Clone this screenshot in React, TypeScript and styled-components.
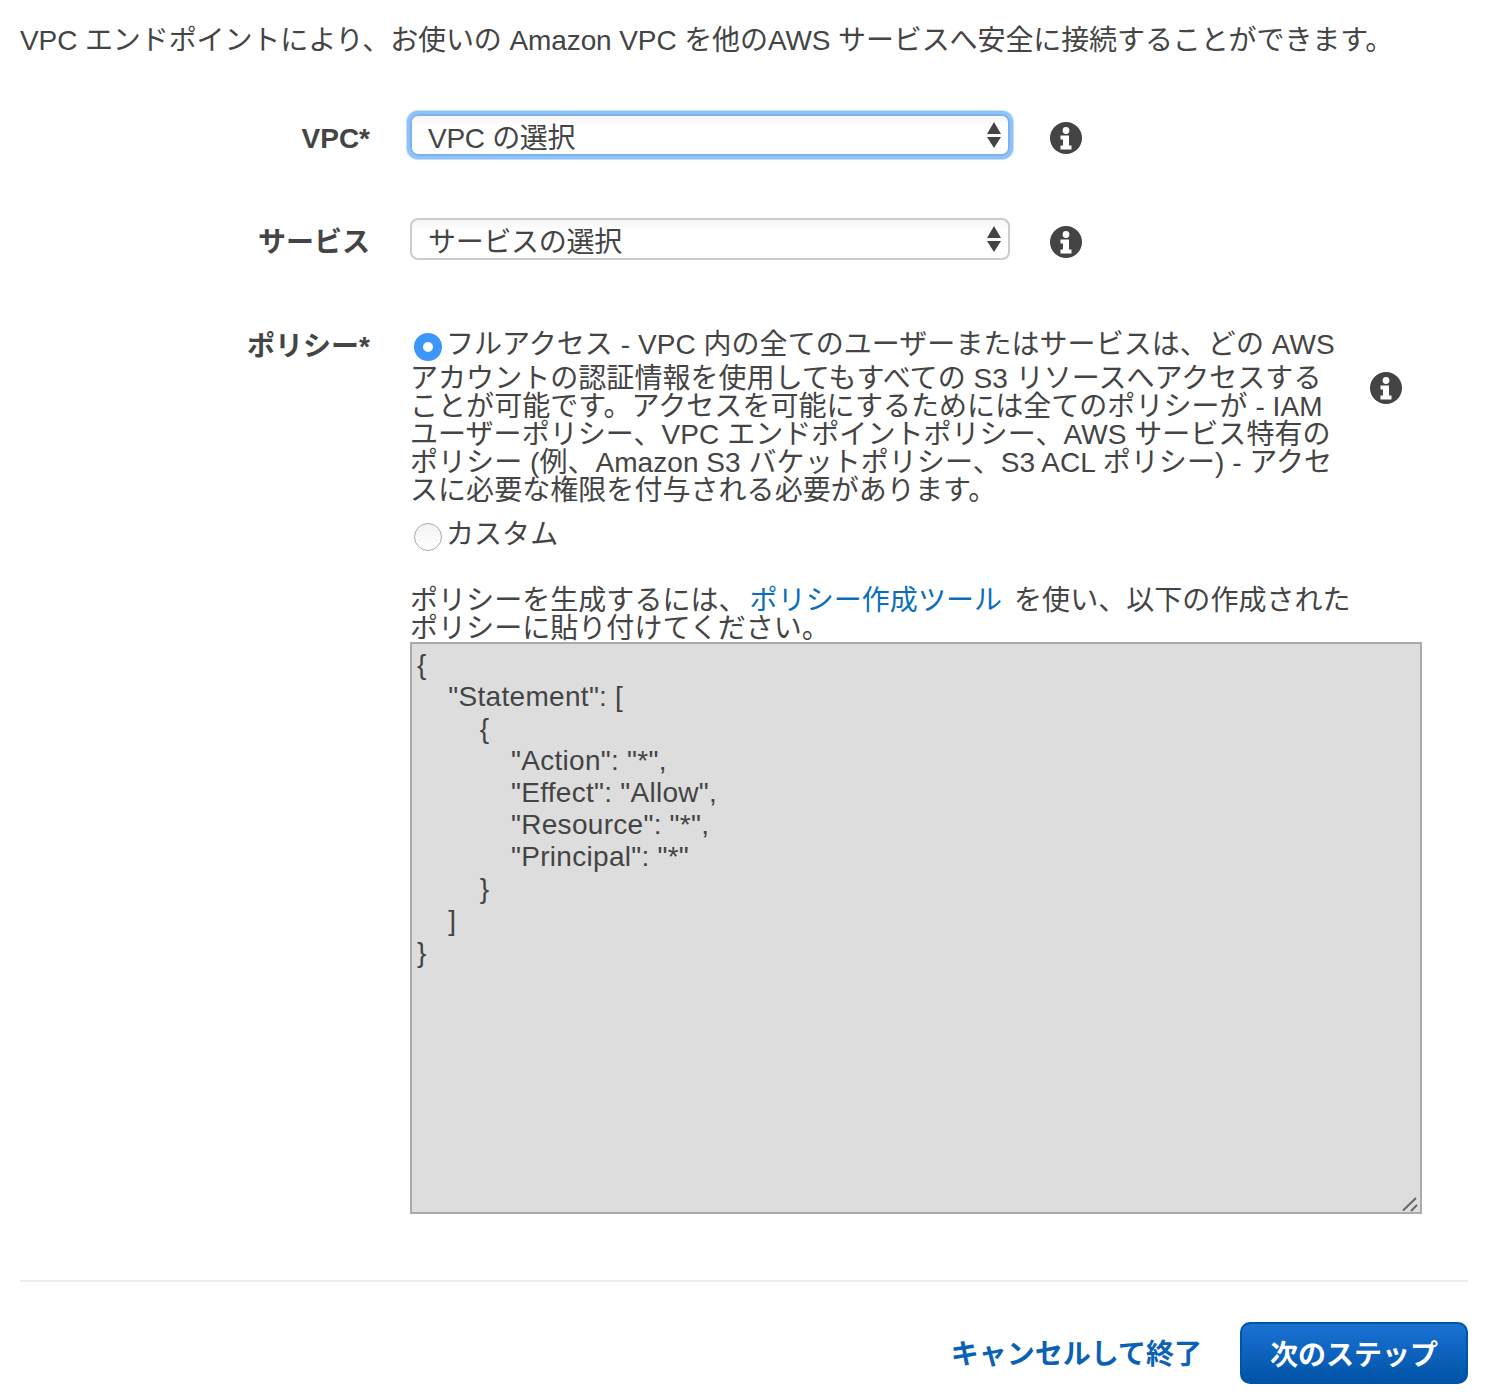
import React from "react"
import styled, { createGlobalStyle } from "styled-components"

const policyJson = `{
    "Statement": [
        {
            "Action": "*",
            "Effect": "Allow",
            "Resource": "*",
            "Principal": "*"
        }
    ]
}`

const GlobalStyle = createGlobalStyle`
  html, body {
    margin: 0;
    padding: 0;
    background: #fff;
    overflow: hidden;
  }
  body {
    font-family: "Liberation Sans", "Noto Sans CJK JP", sans-serif;
    font-size: 28px;
    color: #444;
  }
`

const Page = styled.div`
  width: 1486px;
  height: 1392px;
  box-sizing: border-box;
  padding: 24px 18px 0 20px;
`

const Intro = styled.p`
  margin: 0 0 56px;
  line-height: 34px;
  letter-spacing: -0.1px;
  white-space: nowrap;
`

const Row = styled.div<{ $gap: number }>`
  display: grid;
  grid-template-columns: 350px 1fr;
  column-gap: 40px;
  align-items: start;
  margin-bottom: ${(p) => p.$gap}px;
`

const Label = styled.label<{ $drop?: number }>`
  margin-top: ${(p) => p.$drop ?? 0}px;
  font-weight: bold;
  text-align: right;
  line-height: 42px;
  white-space: nowrap;
`

const SelectLine = styled.div`
  display: flex;
  align-items: center;
  gap: 40px;
`

const SelectWrap = styled.div`
  position: relative;
  width: 600px;
  height: 42px;
`

const Select = styled.select<{ $focused?: boolean }>`
  appearance: none;
  width: 100%;
  height: 100%;
  padding: 6px 40px 0 16px;
  font: inherit;
  letter-spacing: -0.3px;
  color: #444;
  background: linear-gradient(#f6f6f6, #fff 30%);
  border: 2px solid ${(p) => (p.$focused ? "#7fb2e8" : "#ccc")};
  border-radius: 8px;
  outline: none;
  box-shadow: ${(p) => (p.$focused ? "0 0 0 3px #8cc1fb, 0 0 0 4px #c3defc" : "none")};
`

const Arrows = styled.svg`
  position: absolute;
  top: 7px;
  right: 8px;
  width: 16px;
  height: 28px;
  pointer-events: none;
`

const InfoSvg = styled.svg<{ $top?: number }>`
  flex: none;
  width: 32px;
  height: 32px;
  margin-top: ${(p) => p.$top ?? 0}px;
`

const PolicyTop = styled.div`
  display: flex;
  align-items: flex-start;
  gap: 20px;
`

const Options = styled.div`
  width: 940px;
`

const Option = styled.label`
  display: block;
  line-height: 28px;
  letter-spacing: 0.05px;
  white-space: nowrap;
`

const CustomOption = styled(Option)`
  margin-top: 11px;
`

const Radio = styled.input`
  appearance: none;
  display: inline-block;
  box-sizing: border-box;
  width: 28px;
  height: 28px;
  margin: 7px 4px 4px 4px;
  vertical-align: -11px;
  border-radius: 50%;
  border: 1px solid #aaa;
  background: linear-gradient(#f2f2f2, #fff);
  &:checked {
    border: 9px solid #3d97fb;
    background: #fff;
  }
`

const Hint = styled.p`
  margin: 32px 0 0;
  line-height: 28px;
  letter-spacing: 0.05px;
  white-space: nowrap;
`

const Link = styled.a`
  color: #0a6ebd;
  text-decoration: none;
  margin: 0 12px 0 3px;
`

const TextareaWrap = styled.div`
  position: relative;
  width: 1012px;
  height: 572px;
  margin-top: -1px;
`

const PolicyText = styled.textarea`
  display: block;
  box-sizing: border-box;
  width: 100%;
  height: 100%;
  padding: 5px 5px;
  font: inherit;
  line-height: 32px;
  letter-spacing: 0.3px;
  word-spacing: -0.25px;
  color: #444;
  background: #ddd;
  border: 2px solid #aaa;
  border-radius: 0;
  outline: none;
  overflow: hidden;
  white-space: pre;
  resize: none;
`

const Grip = styled.svg`
  position: absolute;
  right: 2px;
  bottom: 2px;
  width: 18px;
  height: 16px;
`

const Divider = styled.hr`
  margin: 66px 0 0;
  border: 0;
  border-top: 2px solid #eee;
`

const Footer = styled.div`
  display: flex;
  align-items: center;
  justify-content: flex-end;
  gap: 38px;
  margin-top: 40px;
`

const Cancel = styled.a`
  padding-bottom: 2px;
  color: #0a62b5;
  font-weight: bold;
  text-decoration: none;
  white-space: nowrap;
`

const NextButton = styled.button`
  width: 228px;
  height: 62px;
  padding: 0;
  font: inherit;
  font-weight: bold;
  color: #fff;
  background: linear-gradient(#1a72d4, #0053a6);
  border: 2px solid #0054a6;
  border-radius: 10px;
`

const InfoIcon = ({ top }: { top?: number }) => (
  <InfoSvg $top={top} viewBox="0 0 32 32">
    <circle cx="16" cy="16" r="16" fill="#444" />
    <circle cx="16" cy="8.500" r="3.400" fill="#fff" />
    <path d="M10.500 13.500h8.500v10h2.500v4h-11v-4h2.500v-6h-2.500z" fill="#fff" />
  </InfoSvg>
)

const SelectArrows = () => (
  <Arrows viewBox="0 0 16 28">
    <path d="M8 1l7 12H1zM8 27l-7-11h14z" fill="#444" />
  </Arrows>
)

export default function App() {
  return (
    <Page>
      <GlobalStyle />
      <Intro>VPC エンドポイントにより、お使いの Amazon VPC を他のAWS サービスへ安全に接続することができます。</Intro>

      <Row $gap={58}>
        <Label $drop={4}>VPC*</Label>
        <SelectLine>
          <SelectWrap>
            <Select $focused defaultValue="vpc">
              <option value="vpc">VPC の選択</option>
            </Select>
            <SelectArrows />
          </SelectWrap>
          <InfoIcon top={6} />
        </SelectLine>
      </Row>

      <Row $gap={62}>
        <Label $drop={4}>サービス</Label>
        <SelectLine>
          <SelectWrap>
            <Select defaultValue="service">
              <option value="service">サービスの選択</option>
            </Select>
            <SelectArrows />
          </SelectWrap>
          <InfoIcon top={6} />
        </SelectLine>
      </Row>

      <Row $gap={0}>
        <Label>ポリシー*</Label>
        <div>
          <PolicyTop>
            <Options>
              <Option>
                <Radio type="radio" name="policy" defaultChecked />
                フルアクセス - VPC 内の全てのユーザーまたはサービスは、どの AWS
                <br />
                アカウントの認証情報を使用してもすべての S3 リソースへアクセスする
                <br />
                ことが可能です。アクセスを可能にするためには全てのポリシーが - IAM
                <br />
                ユーザーポリシー、VPC エンドポイントポリシー、AWS サービス特有の
                <br />
                ポリシー (例、Amazon S3 バケットポリシー、S3 ACL ポリシー) - アクセ
                <br />
                スに必要な権限を付与される必要があります。
              </Option>
              <CustomOption>
                <Radio type="radio" name="policy" />
                カスタム
              </CustomOption>
            </Options>
            <InfoIcon top={46} />
          </PolicyTop>
          <Hint>
            ポリシーを生成するには、<Link href="#">ポリシー作成ツール</Link>を使い、以下の作成された
            <br />
            ポリシーに貼り付けてください。
          </Hint>
          <TextareaWrap>
            <PolicyText readOnly defaultValue={policyJson} />
            <Grip viewBox="0 0 18 16">
              <path d="M1 14.500L14 2M9 15l6-6" stroke="#666" strokeWidth="2" fill="none" />
            </Grip>
          </TextareaWrap>
        </div>
      </Row>

      <Divider />
      <Footer>
        <Cancel href="#">キャンセルして終了</Cancel>
        <NextButton type="button">次のステップ</NextButton>
      </Footer>
    </Page>
  )
}
